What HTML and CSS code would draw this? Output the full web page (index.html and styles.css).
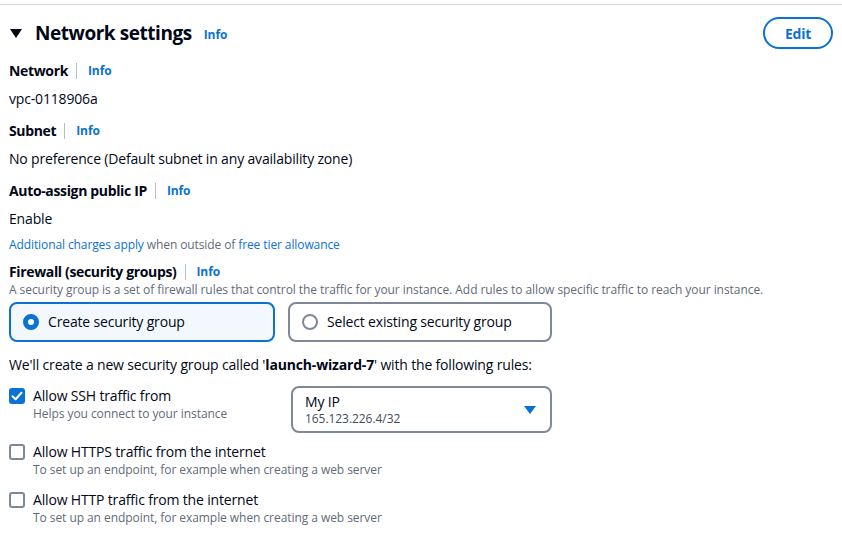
FILE: index.html
```html
<!DOCTYPE html>
<html>
<head>
<meta charset="utf-8">
<link rel="stylesheet" href="styles.css">
</head>
<body>
<div class="panel">
  <div class="header">
    <div class="title-wrap">
      <span class="caret-down"></span>
      <h2 class="title">Network settings</h2>
      <a class="info info-title">Info</a>
    </div>
    <button class="edit-btn">Edit</button>
  </div>

  <div class="field">
    <div class="label-row"><span class="label">Network</span><span class="sep"></span><a class="info">Info</a></div>
    <div class="value">vpc-0118906a</div>
  </div>
  <div class="field">
    <div class="label-row"><span class="label">Subnet</span><span class="sep"></span><a class="info">Info</a></div>
    <div class="value">No preference (Default subnet in any availability zone)</div>
  </div>
  <div class="field">
    <div class="label-row"><span class="label">Auto-assign public IP</span><span class="sep"></span><a class="info">Info</a></div>
    <div class="value">Enable</div>
    <div class="note"><a class="link">Additional charges apply</a> when outside of <a class="link">free tier allowance</a></div>
  </div>

  <div class="firewall">
    <div class="label-row"><span class="label">Firewall (security groups)</span><span class="sep"></span><a class="info">Info</a></div>
    <div class="desc">A security group is a set of firewall rules that control the traffic for your instance. Add rules to allow specific traffic to reach your instance.</div>
    <div class="tiles">
      <div class="tile tile-on"><span class="radio radio-on"></span>Create security group</div>
      <div class="tile tile-off"><span class="radio radio-off"></span>Select existing security group</div>
    </div>
  </div>

  <p class="intro">We'll create a new security group called '<b>launch-wizard-7</b>' with the following rules:</p>

  <div class="rule rule-ssh">
    <div class="check-item">
      <span class="cb cb-on"><svg viewBox="0 0 16 16" width="16" height="16"><path d="M3.5 8.2 L6.6 11.2 L12.5 4.8" fill="none" stroke="#fff" stroke-width="2" stroke-linecap="round" stroke-linejoin="round"/></svg></span>
      <div class="check-text">
        <div class="check-label">Allow SSH traffic from</div>
        <div class="check-desc">Helps you connect to your instance</div>
      </div>
    </div>
    <div class="select">
      <div class="select-text">
        <div class="select-main">My IP</div>
        <div class="select-sub">165.123.226.4/32</div>
      </div>
      <span class="select-caret"></span>
    </div>
  </div>

  <div class="rule rule-https">
    <div class="check-item">
      <span class="cb cb-off"></span>
      <div class="check-text">
        <div class="check-label">Allow HTTPS traffic from the internet</div>
        <div class="check-desc">To set up an endpoint, for example when creating a web server</div>
      </div>
    </div>
  </div>

  <div class="rule rule-http">
    <div class="check-item">
      <span class="cb cb-off"></span>
      <div class="check-text">
        <div class="check-label">Allow HTTP traffic from the internet</div>
        <div class="check-desc">To set up an endpoint, for example when creating a web server</div>
      </div>
    </div>
  </div>
</div>
</body>
</html>
```

FILE: styles.css
```css
* { box-sizing: border-box; }
html, body { margin: 0; padding: 0; background: #fff; }
body {
  font-family: "Open Sans", "Noto Sans", sans-serif;
  color: #000716;
  font-size: 14px;
  line-height: 20px;
  letter-spacing: -0.17px;
}
.panel {
  margin-top: 4px;
  border-top: 1px solid #d5d8dc;
  padding: 0 9px 0 9px;
}
.header {
  display: flex;
  align-items: center;
  justify-content: space-between;
  margin-top: 12px;
  height: 32px;
}
.title-wrap { display: flex; align-items: center; }
.caret-down {
  width: 0; height: 0;
  border-left: 6px solid transparent;
  border-right: 6px solid transparent;
  border-top: 9px solid #000716;
  margin-left: 1px;
  margin-right: 13px;
}
.title {
  margin: 0;
  font-size: 19px;
  line-height: 24px;
  font-weight: 700;
  letter-spacing: -0.45px;
}
.info {
  color: #0972d3;
  font-size: 12px;
  font-weight: 700;
  line-height: 16px;
  letter-spacing: -0.1px;
}
.info-title { margin-left: 12px; margin-top: 4px; }
.edit-btn {
  width: 70px;
  height: 32px;
  border: 2px solid #0972d3;
  border-radius: 16px;
  background: #fff;
  color: #0972d3;
  font-family: inherit;
  font-size: 14px;
  font-weight: 700;
  letter-spacing: -0.2px;
}
.field { margin-top: 12px; }
.label-row { display: flex; align-items: center; height: 20px; }
.label { font-weight: 700; letter-spacing: -0.35px; }
.sep {
  width: 1px;
  height: 16px;
  background: #b6bec9;
  margin: 0 11px 0 8px;
}
.value { margin-top: 8px; }
.note {
  margin-top: 8px;
  font-size: 12px;
  line-height: 16px;
  color: #5f6b7a;
  letter-spacing: -0.1px;
}
.link { color: #0972d3; }
.firewall { margin-top: 9px; }
.desc {
  font-size: 12px;
  line-height: 16px;
  color: #5f6b7a;
  white-space: nowrap;
  letter-spacing: -0.06px;
}
.tiles {
  display: flex;
  gap: 13px;
  margin-top: 4px;
}
.tile {
  height: 40px;
  border-radius: 8px;
  border: 2px solid #7d8998;
  display: flex;
  align-items: center;
  padding-left: 12px;
}
.tile-on { width: 266px; background: #f2f8fd; border-color: #0972d3; }
.tile-off { width: 264px; }
.radio {
  width: 16px; height: 16px;
  border-radius: 50%;
  margin-right: 9px;
  flex-shrink: 0;
}
.radio-on { border: 5px solid #0972d3; background: #fff; }
.radio-off { border: 2px solid #7d8998; background: #fff; }
.intro { margin: 13px 0 0 0; }
.intro b { font-weight: 700; }
.rule { display: flex; }
.rule-ssh { margin-top: 11px; }
.rule-ssh .check-item { width: 282px; }
.rule-https { margin-top: 9px; }
.rule-http { margin-top: 12px; }
.check-item { display: flex; align-items: flex-start; }
.cb {
  width: 16px; height: 16px;
  border-radius: 3px;
  margin-top: 2px;
  margin-right: 8px;
  flex-shrink: 0;
  display: flex;
}
.cb-on { background: #0972d3; }
.cb-off { border: 2px solid #7d8998; }
.check-label { line-height: 20px; }
.check-desc {
  font-size: 12px;
  line-height: 16px;
  color: #5f6b7a;
  letter-spacing: -0.06px;
}
.select {
  width: 261px;
  height: 47px;
  border: 2px solid #7d8998;
  border-radius: 8px;
  display: flex;
  align-items: center;
  justify-content: space-between;
  padding: 0 14px 0 12px;
}
.select-main { line-height: 18px; }
.select-sub { font-size: 12px; line-height: 16px; color: #414d5c; letter-spacing: -0.06px; }
.select-caret {
  width: 0; height: 0;
  border-left: 6px solid transparent;
  border-right: 6px solid transparent;
  border-top: 8px solid #0972d3;
}
```
